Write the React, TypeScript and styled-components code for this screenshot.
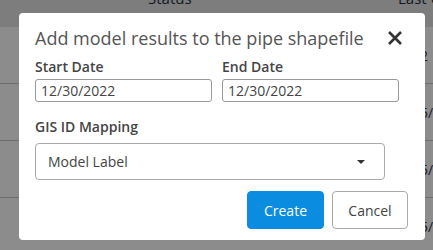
import React from "react";
import styled, { createGlobalStyle } from "styled-components";

const GlobalStyle = createGlobalStyle`
  html, body {
    margin: 0;
    padding: 0;
    width: 433px;
    height: 250px;
    overflow: hidden;
    background: #ffffff;
    font-family: "Open Sans", "Liberation Sans", sans-serif;
  }
`;

const Page = styled.div`
  position: relative;
  width: 433px;
  height: 250px;
  overflow: hidden;
  background: #ffffff;
`;

const Table = styled.div`
  margin-top: -12px;
  width: 433px;
`;

const HeaderRow = styled.div`
  display: grid;
  grid-template-columns: 148px 250px 1fr;
  height: 39px;
  background: #e4e4e4;
  font-size: 15px;
  color: #1f2f44;
  line-height: 20px;
`;

const HeaderCell = styled.div`
  white-space: nowrap;
  overflow: hidden;
`;

const Row = styled.div`
  display: grid;
  grid-template-columns: 420px 1fr;
  align-items: center;
  height: 56px;
  border-bottom: 1px solid #c8c8c8;
  background: #ffffff;
  font-size: 14px;
  color: #333;
`;

const Cell = styled.div`
  white-space: nowrap;
  overflow: hidden;
`;

const Overlay = styled.div`
  position: absolute;
  inset: 0;
  background: rgba(0, 0, 0, 0.45);
`;

const Modal = styled.div`
  position: absolute;
  left: 19px;
  top: 13px;
  width: 406px;
  height: 227px;
  box-sizing: border-box;
  background: #ffffff;
  border-radius: 4px;
  padding: 12px 17px 0 16px;
  display: flex;
  flex-direction: column;
`;

const TitleBar = styled.div`
  display: flex;
  align-items: center;
  justify-content: space-between;
  height: 26px;
`;

const Title = styled.h2`
  margin: 0;
  font-size: 18px;
  font-weight: 400;
  color: #555;
  white-space: nowrap;
`;

const CloseButton = styled.button`
  border: none;
  background: none;
  padding: 0;
  margin-right: 5px;
  width: 16px;
  height: 16px;
  display: flex;
  cursor: pointer;
`;

const DateGrid = styled.div`
  display: grid;
  grid-template-columns: 177px 177px;
  column-gap: 10px;
  margin-top: 6px;
`;

const Field = styled.div`
  display: flex;
  flex-direction: column;
`;

const Label = styled.label`
  font-size: 14px;
  font-weight: 600;
  color: #444;
  line-height: 19px;
  margin-bottom: 3px;
`;

const DateInput = styled.div`
  box-sizing: border-box;
  height: 23px;
  border: 1px solid #999;
  border-radius: 3px;
  padding: 0 5px;
  font-size: 14px;
  line-height: 21px;
  color: #444;
`;

const MappingField = styled(Field)`
  margin-top: 15px;
  width: 350px;
`;

const Select = styled.div`
  box-sizing: border-box;
  height: 37px;
  border: 1px solid #aaa;
  border-radius: 4px;
  padding: 0 19px 0 12px;
  margin-top: 4px;
  display: flex;
  align-items: center;
  justify-content: space-between;
  font-size: 14px;
  color: #444;
`;

const Caret = styled.span`
  width: 0;
  height: 0;
  border-left: 4px solid transparent;
  border-right: 4px solid transparent;
  border-top: 4px solid #333;
`;

const Actions = styled.div`
  display: flex;
  justify-content: flex-end;
  gap: 8px;
  margin-top: 11px;
`;

const ActionButton = styled.button<{ primary?: boolean }>`
  box-sizing: border-box;
  width: ${(p) => (p.primary ? "77px" : "76px")};
  height: 38px;
  border-radius: 4px;
  font-family: "Open Sans", "Liberation Sans", sans-serif;
  font-size: 14px;
  border: 1px solid ${(p) => (p.primary ? "#0a8de0" : "#aaa")};
  background: ${(p) => (p.primary ? "#0a8de0" : "#fff")};
  color: ${(p) => (p.primary ? "#fff" : "#444")};
  cursor: pointer;
`;

const rows = ["2", "5/", "5/", "5/"];

export default function App() {
  return (
    <>
      <GlobalStyle />
      <Page>
        <Table>
          <HeaderRow>
            <HeaderCell />
            <HeaderCell>Status</HeaderCell>
            <HeaderCell>Last Updated</HeaderCell>
          </HeaderRow>
          {rows.map((r, i) => (
            <Row key={i}>
              <Cell />
              <Cell>{r}</Cell>
            </Row>
          ))}
        </Table>
        <Overlay />
        <Modal>
          <TitleBar>
            <Title>Add model results to the pipe shapefile</Title>
            <CloseButton aria-label="Close">
              <svg width="16" height="16" viewBox="0 0 16 16">
                <path
                  d="M2 2 L14 14 M14 2 L2 14"
                  stroke="#333"
                  strokeWidth="2.6"
                  strokeLinecap="butt"
                />
              </svg>
            </CloseButton>
          </TitleBar>
          <DateGrid>
            <Field>
              <Label>Start Date</Label>
              <DateInput>12/30/2022</DateInput>
            </Field>
            <Field>
              <Label>End Date</Label>
              <DateInput>12/30/2022</DateInput>
            </Field>
          </DateGrid>
          <MappingField>
            <Label>GIS ID Mapping</Label>
            <Select>
              <span>Model Label</span>
              <Caret />
            </Select>
          </MappingField>
          <Actions>
            <ActionButton primary>Create</ActionButton>
            <ActionButton>Cancel</ActionButton>
          </Actions>
        </Modal>
      </Page>
    </>
  );
}
